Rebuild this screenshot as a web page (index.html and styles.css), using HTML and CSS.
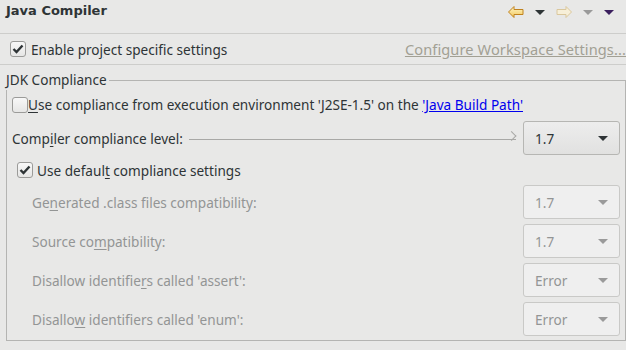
FILE: index.html
```html
<!DOCTYPE html>
<html lang="en">
<head>
    <meta charset="UTF-8">
    <title>Java Compiler</title>
    <link rel="stylesheet" href="styles.css">
</head>
<body>

<div class="header">
    <h1>Java Compiler</h1>
    <div class="nav-icons">
        <svg class="nav-arrow" width="16" height="12" viewBox="0 0 16 12">
            <defs>
                <linearGradient id="back" x1="0" y1="0" x2="0" y2="1">
                    <stop offset="0" stop-color="#fff7c8"/>
                    <stop offset="1" stop-color="#f2c75a"/>
                </linearGradient>
            </defs>
            <path d="M0.5 6 L6 0.5 L6 3.5 L15 3.5 L15 8.5 L6 8.5 L6 11.5 Z" fill="url(#back)" stroke="#c0821e"/>
        </svg>
        <span class="tri dark"></span>
        <svg class="nav-arrow" width="16" height="12" viewBox="0 0 16 12">
            <path d="M15.5 6 L10 0.5 L10 3.5 L1 3.5 L1 8.5 L10 8.5 L10 11.5 Z" fill="#f7efd8" stroke="#dac79c"/>
        </svg>
        <span class="tri grey"></span>
        <span class="tri purple"></span>
    </div>
</div>

<div class="project-row">
    <label class="check">
        <span class="box"><svg width="12" height="10" viewBox="0 0 12 10"><path d="M1.5 5 L4.5 8 L10.5 1.5" fill="none" stroke="#2e3436" stroke-width="2.4"/></svg></span>
        <span>Enable pro<u>j</u>ect specific settings</span>
    </label>
    <a class="workspace-link">Configure Workspace Settings...</a>
</div>

<div class="group">
    <div class="group-head">
        <span class="group-title">JDK Compliance</span>
        <span class="group-line"></span>
    </div>
    <div class="group-body">
        <label class="check row-env">
            <span class="box"></span>
            <span><u>U</u>se compliance from execution environment 'J2SE-1.5' on the <a class="build-link">'Java Build Path'</a></span>
        </label>

        <div class="field-row">
            <span class="field-label">Comp<u>i</u>ler compliance level:</span>
            <span class="leader"></span>
            <div class="combo">
                <span>1.7</span>
                <span class="combo-arrow"></span>
            </div>
        </div>

        <label class="check row-default">
            <span class="box"><svg width="12" height="10" viewBox="0 0 12 10"><path d="M1.5 5 L4.5 8 L10.5 1.5" fill="none" stroke="#2e3436" stroke-width="2.4"/></svg></span>
            <span>Use defaul<u>t</u> compliance settings</span>
        </label>

        <div class="field-row disabled">
            <span class="field-label">Ge<u>n</u>erated .class files compatibility:</span>
            <div class="combo"><span>1.7</span><span class="combo-arrow"></span></div>
        </div>
        <div class="field-row disabled">
            <span class="field-label">Source co<u>m</u>patibility:</span>
            <div class="combo"><span>1.7</span><span class="combo-arrow"></span></div>
        </div>
        <div class="field-row disabled">
            <span class="field-label">Disallow identifie<u>r</u>s called 'assert':</span>
            <div class="combo"><span>Error</span><span class="combo-arrow"></span></div>
        </div>
        <div class="field-row disabled">
            <span class="field-label">Disallo<u>w</u> identifiers called 'enum':</span>
            <div class="combo"><span>Error</span><span class="combo-arrow"></span></div>
        </div>
    </div>
</div>

</body>
</html>
```

FILE: styles.css
```css
body {
    margin: 0;
    background-color: #e8e8e7;
    font-family: "Noto Sans", sans-serif;
    font-size: 13.6px;
    color: #2e3436;
    width: 626px;
    height: 350px;
    overflow: hidden;
}

u {
    text-underline-offset: 2px;
}

.header {
    display: flex;
    justify-content: space-between;
    align-items: flex-start;
    height: 33px;
    border-bottom: 1px solid #cdcdcb;
}

.header h1 {
    margin: 2px 0 0 6px;
    font-family: "DejaVu Sans", sans-serif;
    font-size: 13px;
    font-weight: bold;
    line-height: 18px;
}

.nav-icons {
    display: flex;
    align-items: center;
    margin-top: 6px;
    margin-right: 12px;
    height: 12px;
}

.nav-arrow {
    display: block;
    margin-right: 11px;
}

.tri {
    width: 0;
    height: 0;
    border-left: 5px solid transparent;
    border-right: 5px solid transparent;
    border-top: 5px solid #2e3436;
    margin-right: 11px;
}

.tri.grey {
    border-top-color: #9a9a9a;
}

.tri.purple {
    border-top-color: #3b1f5e;
    margin-right: 0;
}

.project-row {
    display: flex;
    justify-content: space-between;
    align-items: center;
    height: 30px;
    border-bottom: 1px solid #cdcdcb;
    padding-left: 10px;
}

.check {
    display: flex;
    align-items: center;
}

.box {
    display: inline-flex;
    align-items: center;
    justify-content: center;
    width: 14px;
    height: 14px;
    border: 1px solid #9b9b99;
    border-radius: 3px;
    background: linear-gradient(#f8f8f8, #e6e6e5);
    margin-right: 5px;
    flex-shrink: 0;
}

.workspace-link {
    color: #a2a094;
    text-decoration: underline;
    white-space: nowrap;
    font-size: 14.6px;
    margin-right: 0;
    letter-spacing: 0.1px;
}

.group {
    margin-top: 5px;
}

.group-head {
    display: flex;
    height: 20px;
    padding-left: 6px;
}

.group-title {
    line-height: 20px;
    padding-right: 2px;
}

.group-line {
    flex: 1;
    align-self: flex-end;
    height: 10px;
    border-top: 1px solid #b4b4b2;
    border-right: 1px solid #b4b4b2;
    box-sizing: border-box;
}

.group-body {
    margin-left: 6px;
    border: 1px solid #b4b4b2;
    border-top: none;
    height: 251px;
    box-sizing: border-box;
    padding: 4px 5px 0 5px;
    display: flex;
    flex-direction: column;
}

.row-env {
    height: 21px;
    white-space: nowrap;
}

.row-env .box {
    margin-right: 0;
}

.build-link {
    color: #0000ee;
    text-decoration: underline;
}

.field-row {
    display: flex;
    align-items: center;
    margin-top: 6px;
}

.leader {
    flex: 1;
    position: relative;
    height: 1px;
    background-color: #a8a8a6;
    margin: 2px 7px 0 6px;
}

.leader::after {
    content: "";
    position: absolute;
    right: 0;
    top: -3px;
    width: 6px;
    height: 6px;
    border-top: 1px solid #a8a8a6;
    border-right: 1px solid #a8a8a6;
    transform: translateX(0.5px) rotate(45deg);
    transform-origin: 100% 0;
}

.combo {
    display: flex;
    justify-content: space-between;
    align-items: center;
    width: 97px;
    height: 34px;
    box-sizing: border-box;
    border: 1px solid #b6b6b3;
    border-radius: 3px;
    background: linear-gradient(#ededed, #e1e1e0);
    padding: 0 11px 0 11px;
    margin-left: auto;
}

.combo-arrow {
    width: 0;
    height: 0;
    border-left: 5px solid transparent;
    border-right: 5px solid transparent;
    border-top: 5px solid #2e3436;
}

.row-default {
    height: 20px;
    margin-top: 5px;
    padding-left: 5px;
}

.row-default .box {
    margin-right: 4px;
}

.field-row.disabled {
    margin-top: 5px;
    padding-left: 20px;
    color: #939595;
}

.field-row.disabled .combo {
    background: #efefef;
    border-color: #c9c9c7;
}

.field-row.disabled .combo-arrow {
    border-top-color: #9a9a9a;
}
```
